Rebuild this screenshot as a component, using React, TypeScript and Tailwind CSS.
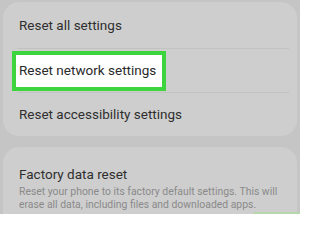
export default function App() {
  return (
    <div
      className="w-[300px] h-[214px] overflow-hidden bg-[#c5c5c5] flex flex-col px-[3px] pt-[2px]"
      style={{ fontFamily: 'Roboto, "Noto Sans", sans-serif' }}
    >
      <div className="h-[134px] shrink-0 rounded-[16px] bg-[#cecece] flex flex-col">
        <div className="h-[46px] flex items-center pl-[16px] text-[13.5px] text-[#2e2e2e]">Reset all settings</div>
        <div className="h-px bg-[#c2c2c2] ml-[14px] mr-[8px]" />
        <div className="h-[43px] flex items-center pl-[9px]">
          <div className="h-[40px] border-[4px] border-[#3ed43e] bg-white flex items-center pl-[3px] pr-[6px] text-[13.5px] text-[#2a2a2a]">
            Reset network settings
          </div>
        </div>
        <div className="h-px bg-[#c2c2c2] ml-[14px] mr-[8px]" />
        <div className="flex-1 flex items-center pl-[16px] pb-[1px] text-[13.5px] text-[#2e2e2e]">Reset accessibility settings</div>
      </div>
      <div className="mt-[11px] flex-1 rounded-t-[16px] bg-[#cecece] flex flex-col pl-[16px] pt-[17px]">
        <div className="text-[13.5px] leading-[20px] text-[#2e2e2e]">Factory data reset</div>
        <div className="text-[10.4px] leading-[12.5px] text-[#8a8a8a] mt-[2px] pr-[8px]">
          Reset your phone to its factory default settings. This will erase all data, including files and downloaded apps.
        </div>
        <div className="mt-auto self-end w-[46px] h-[2px] bg-[#b6d6ac] -mr-[3px]" />
      </div>
    </div>
  );
}
